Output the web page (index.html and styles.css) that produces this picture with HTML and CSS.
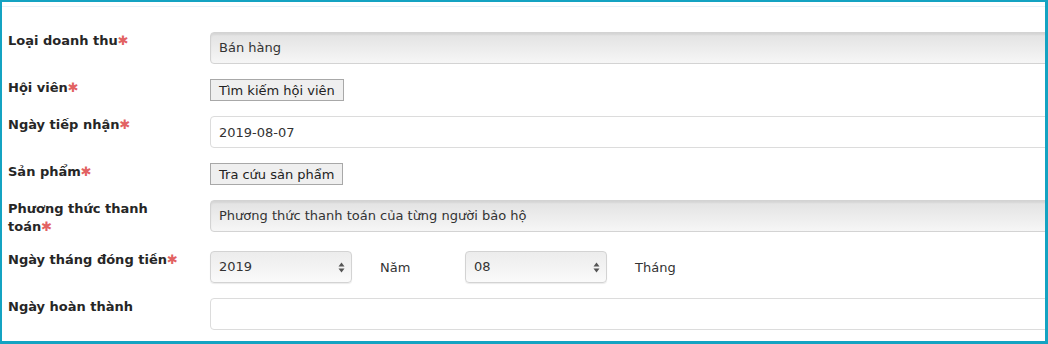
FILE: index.html
```html
<html>
<head>
    <meta name="viewport" content="width=device-width">
    <title>Thêm doanh thu</title>
    <link rel="stylesheet" href="styles.css">
</head>
<body>

<div class="frame">
    <div class="top-line"></div>

    <form class="form">
        <div class="row">
            <label class="label">Loại doanh thu<span class="req">✱</span></label>
            <div class="field">
                <div class="box box-grey">Bán hàng</div>
            </div>
        </div>

        <div class="row">
            <label class="label">Hội viên<span class="req">✱</span></label>
            <div class="field">
                <button type="button" class="btn">Tìm kiếm hội viên</button>
            </div>
        </div>

        <div class="row">
            <label class="label">Ngày tiếp nhận<span class="req">✱</span></label>
            <div class="field">
                <input class="box box-white" type="text" value="2019-08-07">
            </div>
        </div>

        <div class="row">
            <label class="label">Sản phẩm<span class="req">✱</span></label>
            <div class="field">
                <button type="button" class="btn">Tra cứu sản phẩm</button>
            </div>
        </div>

        <div class="row">
            <label class="label">Phương thức thanh toán<span class="req">✱</span></label>
            <div class="field">
                <div class="box box-grey">Phương thức thanh toán của từng người bảo hộ</div>
            </div>
        </div>

        <div class="row">
            <label class="label">Ngày tháng đóng tiền<span class="req">✱</span></label>
            <div class="field field-inline">
                <div class="select">
                    <span>2019</span>
                    <svg class="arrows" width="7" height="11" viewBox="0 0 7 11"><path d="M3.5 0.5 L6.5 4.5 L0.5 4.5 Z M3.5 10.5 L0.5 6.5 L6.5 6.5 Z" fill="#555"/></svg>
                </div>
                <span class="unit">Năm</span>
                <div class="select">
                    <span>08</span>
                    <svg class="arrows" width="7" height="11" viewBox="0 0 7 11"><path d="M3.5 0.5 L6.5 4.5 L0.5 4.5 Z M3.5 10.5 L0.5 6.5 L6.5 6.5 Z" fill="#555"/></svg>
                </div>
                <span class="unit">Tháng</span>
            </div>
        </div>

        <div class="row">
            <label class="label">Ngày hoàn thành</label>
            <div class="field">
                <input class="box box-white" type="text" value="">
            </div>
        </div>
    </form>
</div>

</body>
</html>
```

FILE: styles.css
```css
body {
    margin: 0;
    padding: 0;
    background: #fff;
    font-family: "DejaVu Sans", Verdana, sans-serif;
    color: #333;
}

.frame {
    height: 344px;
    box-sizing: border-box;
    border: 3px solid #14a3c2;
    border-top-width: 2px;
    border-left-width: 2px;
    overflow: hidden;
    background: #fff;
}

.top-line {
    height: 4px;
    border-bottom: 1px solid #eaf3fa;
}

.form {
    padding: 25px 0 0 6px;
    display: flex;
    flex-direction: column;
    gap: 15px;
}

.row {
    display: flex;
    align-items: flex-start;
}

.label {
    width: 178px;
    margin-right: 24px;
    font-size: 13px;
    font-weight: bold;
    line-height: 18px;
    color: #262626;
}

.req {
    color: #e26262;
    font-size: 13px;
}

.field {
    flex: 1;
    margin-right: -30px;
}

.box {
    display: block;
    width: 100%;
    height: 32px;
    box-sizing: border-box;
    padding: 0 8px;
    border-radius: 4px;
    font-family: "DejaVu Sans", Verdana, sans-serif;
    font-size: 13px;
    line-height: 30px;
    color: #333;
}

.box-grey {
    border: 1px solid #d3d3d3;
    background: linear-gradient(#e2e2e2, #f6f6f6);
    box-shadow: inset 0 2px 2px rgba(0, 0, 0, 0.06);
}

.box-white {
    border: 1px solid #dcdcdc;
    background: #fff;
    outline: none;
}

.btn {
    height: 22px;
    padding: 0 8px;
    border: 1px solid #a8a8a8;
    background: #efefef;
    font-family: "DejaVu Sans", Verdana, sans-serif;
    font-size: 13px;
    color: #222;
    border-radius: 0;
}

.field-inline {
    display: flex;
    align-items: center;
}

.select {
    position: relative;
    width: 142px;
    height: 32px;
    box-sizing: border-box;
    padding: 0 8px;
    border: 1px solid #d3d3d3;
    border-radius: 4px;
    background: linear-gradient(#ececec, #fafafa);
    box-shadow: 0 1px 1px rgba(0, 0, 0, 0.08);
    font-size: 13px;
    line-height: 30px;
    color: #333;
}

.arrows {
    position: absolute;
    right: 6px;
    top: 10px;
}

.unit {
    width: 113px;
    box-sizing: border-box;
    padding-left: 28px;
    font-size: 13px;
    color: #333;
}
```
